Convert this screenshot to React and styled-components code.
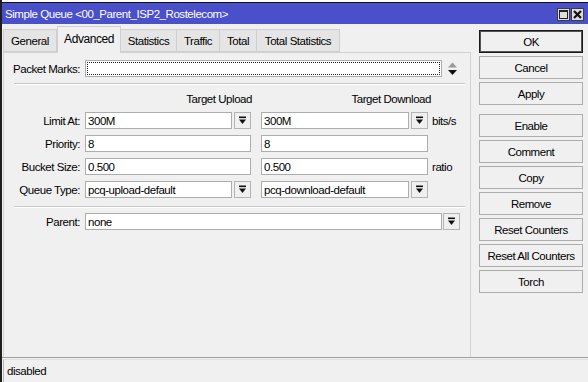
import styled, { createGlobalStyle } from "styled-components";

const GlobalStyle = createGlobalStyle`
  * { box-sizing: border-box; }
  html, body { margin: 0; padding: 0; background: #ffffff; }
  body {
    font-family: "Liberation Sans", Arial, sans-serif;
    font-size: 11.5px;
    letter-spacing: -0.45px;
    color: #000;
  }
`;

const Window = styled.div`
  width: 588px;
  height: 382px;
  display: flex;
  flex-direction: column;
  border-left: 2px solid #1e1e1e;
  background: #f0f0f0;
  overflow: hidden;
`;

const TopStrip = styled.div`
  height: 3px;
  background: #ffffff;
  border-bottom: 1px solid #111;
`;

const TitleBar = styled.div`
  height: 21px;
  display: flex;
  align-items: center;
  justify-content: space-between;
  background: #4a4fca;
  color: #ffffff;
  padding: 0 4px 0 3px;
  font-size: 11.5px;
`;

const TitleText = styled.span`
  white-space: nowrap;
`;

const TitleControls = styled.div`
  display: flex;
  gap: 1px;
  margin-top: 1px;
`;

const TitleButton = styled.div`
  width: 13px;
  height: 13px;
  display: flex;
  align-items: center;
  justify-content: center;
  background: #dcdcdc;
  border: 1px solid #3c3c3c;
`;

const Body = styled.div`
  flex: 1;
  display: flex;
  min-height: 0;
`;

const Main = styled.div`
  width: 469px;
  display: flex;
  flex-direction: column;
  padding-left: 1px;
`;

const TabStrip = styled.div`
  height: 28px;
  display: flex;
  align-items: flex-end;
`;

const Tab = styled.div`
  width: ${(p) => p.$w}px;
  height: ${(p) => (p.$active ? 27 : 23)}px;
  display: flex;
  align-items: center;
  justify-content: center;
  padding-bottom: ${(p) => (p.$active ? 3 : 0)}px;
  background: ${(p) => (p.$active ? "#f0f0f0" : "#e5e5e5")};
  border: 1px solid #cfcfcf;
  border-bottom: ${(p) => (p.$active ? "none" : "1px solid #cfcfcf")};
  border-left: ${(p) => (p.$first || p.$active ? "1px solid #cfcfcf" : "none")};
  margin-bottom: ${(p) => (p.$active ? -1 : 0)}px;
  position: relative;
  z-index: ${(p) => (p.$active ? 1 : 0)};
  white-space: nowrap;
  font-size: ${(p) => (p.$active ? 12 : 11.5)}px;
`;

const Panel = styled.div`
  flex: 1;
  display: flex;
  flex-direction: column;
  border: 1px solid #d2d2d2;
  border-bottom: none;
  padding: 7px 0 0 4px;
`;

const Row = styled.div`
  display: flex;
  align-items: center;
  height: 17px;
  margin-top: ${(p) => p.$mt || 0}px;
`;

const Label = styled.div`
  width: 72px;
  margin-right: 5px;
  text-align: right;
  white-space: nowrap;
`;

const Field = styled.div`
  width: ${(p) => p.$w}px;
  height: 17px;
  display: flex;
  align-items: center;
  padding-left: 2px;
  background: #ffffff;
  border: 1px solid #adadad;
  white-space: nowrap;
  overflow: hidden;
  outline: ${(p) => (p.$dotted ? "1px dotted #222" : "none")};
  outline-offset: -3px;
`;

const Column = styled.div`
  width: ${(p) => p.$w}px;
  display: flex;
  align-items: center;
  justify-content: space-between;
  margin-right: ${(p) => p.$mr || 0}px;
`;

const DropButton = styled.div`
  width: 17px;
  height: 17px;
  margin-left: ${(p) => p.$ml ?? 2}px;
  display: flex;
  align-items: center;
  justify-content: center;
  background: #f0f0f0;
  border: 1px solid #b4b4b4;
`;

const Unit = styled.span`
  margin-left: 4px;
`;

const Separator = styled.div`
  width: 451px;
  margin-top: ${(p) => p.$mt}px;
  margin-left: 6px;
  height: 2px;
  border-top: 1px solid #c9c9c9;
  border-bottom: 1px solid #ffffff;
`;

const HeaderCell = styled.div`
  width: ${(p) => p.$w}px;
  margin-right: ${(p) => p.$mr || 0}px;
  text-align: right;
  white-space: nowrap;
`;

const Spinner = styled.div`
  margin-left: 5px;
  display: flex;
`;

const Side = styled.div`
  flex: 1;
  display: flex;
  flex-direction: column;
  padding: 6px 0 0 8px;
`;

const Button = styled.div`
  width: 104px;
  height: 23px;
  display: flex;
  align-items: center;
  justify-content: center;
  background: #f0f0f0;
  border: 1px solid ${(p) => (p.$primary ? "#1a1a1a" : "#adadad")};
  box-shadow: ${(p) => (p.$primary ? "inset 0 0 0 1px #555" : "none")};
  margin-bottom: 3px;
  margin-top: ${(p) => p.$mt || 0}px;
  white-space: nowrap;
`;

const StatusBar = styled.div`
  height: 25px;
  border-top: 1px solid #a0a0a0;
  padding: 1px 0 0 1px;
  display: flex;
`;

const StatusField = styled.div`
  flex: 1;
  display: flex;
  align-items: center;
  padding-left: 3px;
  border-left: 1px solid #b8b8b8;
  border-top: 1px solid #e2e2e2;
`;

const DropIcon = () => (
  <svg width="9" height="9" viewBox="0 0 9 9">
    <rect x="1" y="0.5" width="7" height="1.6" fill="#111" />
    <path d="M1 3.5 H8 L4.5 8 Z" fill="#111" />
  </svg>
);

const SpinIcon = () => (
  <svg width="11" height="16" viewBox="0 0 11 16">
    <path d="M1 6.5 L5.5 1.5 L10 6.5 Z" fill="#9a9a9a" />
    <path d="M1 9 H10 L5.5 14 Z" fill="#111" />
  </svg>
);

const MaxIcon = () => (
  <svg width="9" height="9" viewBox="0 0 9 9">
    <rect x="0.5" y="0.5" width="8" height="8" fill="none" stroke="#222" />
    <rect x="0.5" y="0.5" width="8" height="1.5" fill="#222" />
  </svg>
);

const CloseIcon = () => (
  <svg width="9" height="9" viewBox="0 0 9 9">
    <path d="M1 1 L8 8 M8 1 L1 8" stroke="#111" strokeWidth="2.2" />
  </svg>
);

const tabs = [
  { name: "General", w: 54 },
  { name: "Advanced", w: 64, active: true },
  { name: "Statistics", w: 56 },
  { name: "Traffic", w: 43 },
  { name: "Total", w: 37 },
  { name: "Total Statistics", w: 83 },
];

const buttons = [
  { label: "OK", primary: true },
  { label: "Cancel" },
  { label: "Apply" },
  { label: "Enable", mt: 6 },
  { label: "Comment" },
  { label: "Copy" },
  { label: "Remove" },
  { label: "Reset Counters" },
  { label: "Reset All Counters" },
  { label: "Torch" },
];

const Combo = ({ value, w, mr }) => (
  <Column $w={w} $mr={mr}>
    <Field $w={w - 19}>{value}</Field>
    <DropButton>
      <DropIcon />
    </DropButton>
  </Column>
);

const App = () => {
  return (
    <>
      <GlobalStyle />
      <Window>
        <TopStrip />
        <TitleBar>
          <TitleText>Simple Queue &lt;00_Parent_ISP2_Rostelecom&gt;</TitleText>
          <TitleControls>
            <TitleButton>
              <MaxIcon />
            </TitleButton>
            <TitleButton>
              <CloseIcon />
            </TitleButton>
          </TitleControls>
        </TitleBar>

        <Body>
          <Main>
            <TabStrip>
              {tabs.map((t, i) => (
                <Tab key={t.name} $w={t.w} $active={t.active} $first={i === 0}>
                  {t.name}
                </Tab>
              ))}
            </TabStrip>

            <Panel>
              <Row>
                <Label>Packet Marks:</Label>
                <Field $w={357} $dotted />
                <Spinner>
                  <SpinIcon />
                </Spinner>
              </Row>

              <Separator $mt={6} />

              <Row $mt={5}>
                <Label />
                <HeaderCell $w={167} $mr={10}>
                  Target Upload
                </HeaderCell>
                <HeaderCell $w={169}>Target Download</HeaderCell>
              </Row>

              <Row $mt={5}>
                <Label>Limit At:</Label>
                <Combo value="300M" w={166} mr={10} />
                <Combo value="300M" w={167} />
                <Unit>bits/s</Unit>
              </Row>

              <Row $mt={6}>
                <Label>Priority:</Label>
                <Column $w={166} $mr={10}>
                  <Field $w={166}>8</Field>
                </Column>
                <Column $w={167}>
                  <Field $w={167}>8</Field>
                </Column>
              </Row>

              <Row $mt={6}>
                <Label>Bucket Size:</Label>
                <Column $w={166} $mr={10}>
                  <Field $w={166}>0.500</Field>
                </Column>
                <Column $w={167}>
                  <Field $w={167}>0.500</Field>
                </Column>
                <Unit>ratio</Unit>
              </Row>

              <Row $mt={6}>
                <Label>Queue Type:</Label>
                <Combo value="pcq-upload-default" w={166} mr={10} />
                <Combo value="pcq-download-default" w={167} />
              </Row>

              <Separator $mt={8} />

              <Row $mt={5}>
                <Label>Parent:</Label>
                <Field $w={357}>none</Field>
                <DropButton $ml={1}>
                  <DropIcon />
                </DropButton>
              </Row>
            </Panel>
          </Main>

          <Side>
            {buttons.map((b) => (
              <Button key={b.label} $primary={b.primary} $mt={b.mt}>
                {b.label}
              </Button>
            ))}
          </Side>
        </Body>

        <StatusBar>
          <StatusField>disabled</StatusField>
        </StatusBar>
      </Window>
    </>
  );
};

export default App;
